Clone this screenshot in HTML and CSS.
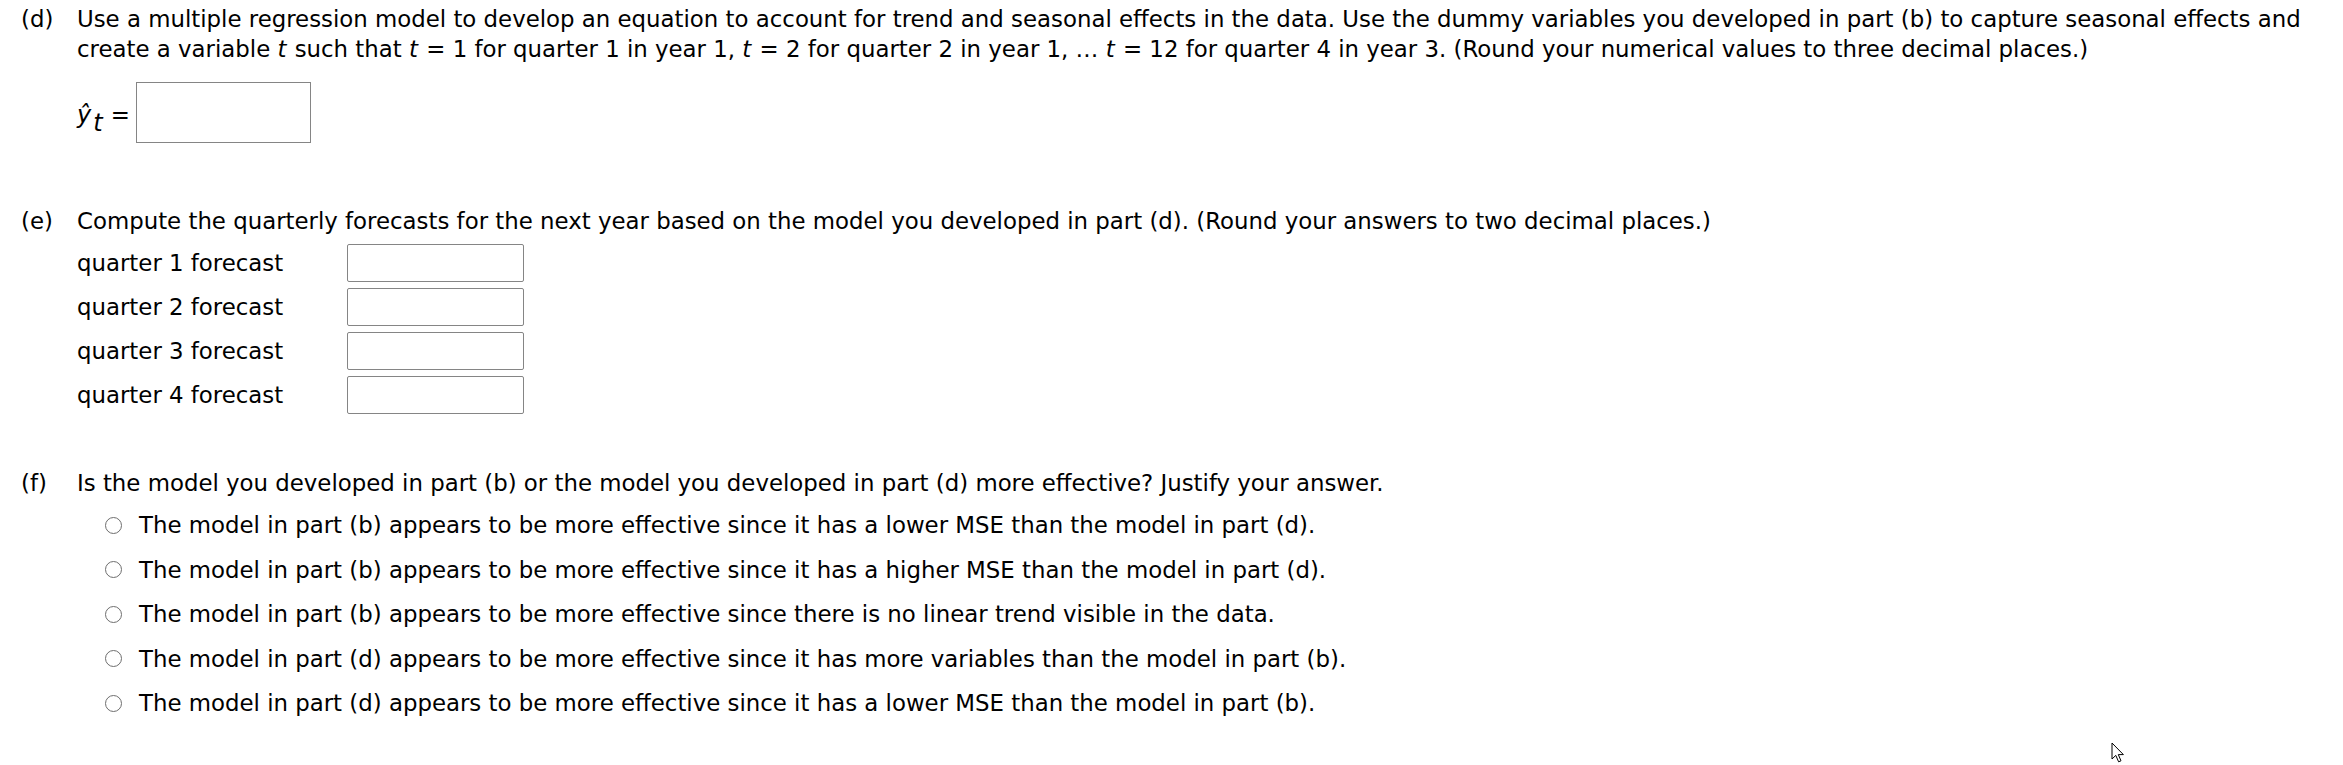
FILE: index.html
```html
<!DOCTYPE html>
<html lang="en">
<head>
<meta charset="utf-8">
<title>Regression question</title>
<link rel="stylesheet" href="styles.css">
</head>
<body>
<div class="page">
  <div class="part part-d">
    <div class="label">(d)</div>
    <div class="body">
      <p class="prompt">Use a multiple regression model to develop an equation to account for trend and seasonal effects in the data. Use the dummy variables you developed in part (b) to capture seasonal effects and create a variable <i>t</i> such that <i>t</i> = 1 for quarter 1 in year 1, <i>t</i> = 2 for quarter 2 in year 1, … <i>t</i> = 12 for quarter 4 in year 3. (Round your numerical values to three decimal places.)</p>
      <div class="eqrow">
        <span class="eqtext"><span class="yhat">ŷ<span class="sub">t</span></span><span class="eqsign">=</span></span>
        <span class="box box-eq"></span>
      </div>
    </div>
  </div>

  <div class="part part-e">
    <div class="label">(e)</div>
    <div class="body">
      <p class="prompt">Compute the quarterly forecasts for the next year based on the model you developed in part (d). (Round your answers to two decimal places.)</p>
      <div class="qrows">
        <div class="qrow"><span class="qlabel">quarter 1 forecast</span><span class="box box-q"></span></div>
        <div class="qrow"><span class="qlabel">quarter 2 forecast</span><span class="box box-q"></span></div>
        <div class="qrow"><span class="qlabel">quarter 3 forecast</span><span class="box box-q"></span></div>
        <div class="qrow"><span class="qlabel">quarter 4 forecast</span><span class="box box-q"></span></div>
      </div>
    </div>
  </div>

  <div class="part part-f">
    <div class="label">(f)</div>
    <div class="body">
      <p class="prompt">Is the model you developed in part (b) or the model you developed in part (d) more effective? Justify your answer.</p>
      <ul class="options">
        <li class="option"><span class="radio"></span><span>The model in part (b) appears to be more effective since it has a lower MSE than the model in part (d).</span></li>
        <li class="option"><span class="radio"></span><span>The model in part (b) appears to be more effective since it has a higher MSE than the model in part (d).</span></li>
        <li class="option"><span class="radio"></span><span>The model in part (b) appears to be more effective since there is no linear trend visible in the data.</span></li>
        <li class="option"><span class="radio"></span><span>The model in part (d) appears to be more effective since it has more variables than the model in part (b).</span></li>
        <li class="option"><span class="radio"></span><span>The model in part (d) appears to be more effective since it has a lower MSE than the model in part (b).</span></li>
      </ul>
    </div>
  </div>
</div>
<svg class="cursor" width="14" height="22" viewBox="0 0 14 22" aria-hidden="true">
  <path d="M1 1 L1 17 L4.8 13.4 L7.6 19.8 L10 18.8 L7.3 12.6 L12.4 12.6 Z" fill="#fff" stroke="#000" stroke-width="1" stroke-linejoin="miter"/>
</svg>
</body>
</html>
```
FILE: styles.css
```css
html, body {
  margin: 0;
  padding: 0;
  background: #fff;
}
body {
  font-family: "DejaVu Sans", Verdana, sans-serif;
  font-size: 22.85px;
  line-height: 30px;
  color: #000;
  position: relative;
  min-height: 765px;
}
.page {
  padding: 4px 8px 0 21px;
}
.part {
  display: flex;
}
.label {
  width: 56px;
  flex: none;
}
.body {
  flex: 1;
  min-width: 0;
}
.prompt {
  margin: 0;
}
.prompt i {
  font-style: italic;
  padding-right: 1px;
}
.eqrow {
  display: flex;
  align-items: center;
  margin-top: 18px;
}
.eqtext {
  display: flex;
  align-items: baseline;
  padding-top: 5px;
}
.yhat {
  font-style: italic;
  font-size: 24px;
}
.yhat .sub {
  position: relative;
  top: 8px;
  margin-left: 2px;
}
.eqsign {
  margin: 0 6px 0 8px;
}
.box {
  display: block;
  background: #fff;
  border: 1px solid #858585;
  box-sizing: border-box;
}
.box-eq {
  width: 175px;
  height: 61px;
}
.part-e {
  margin-top: 63px;
}
.qrows {
  margin-top: 8px;
  display: flex;
  flex-direction: column;
  gap: 6px;
}
.qrow {
  display: flex;
  align-items: center;
}
.qlabel {
  width: 270px;
  flex: none;
}
.box-q {
  width: 177px;
  height: 38px;
  border-radius: 2px;
}
.part-f {
  margin-top: 54px;
}
.options {
  list-style: none;
  margin: 12px 0 0 0;
  padding: 0 0 0 28px;
  display: flex;
  flex-direction: column;
  gap: 14.5px;
}
.option {
  display: flex;
  align-items: center;
}
.radio {
  width: 17px;
  height: 17px;
  box-sizing: border-box;
  border: 1.6px solid #6e6e6e;
  border-radius: 50%;
  margin-right: 17px;
  flex: none;
}
.cursor {
  position: absolute;
  left: 2111px;
  top: 742px;
}
```
